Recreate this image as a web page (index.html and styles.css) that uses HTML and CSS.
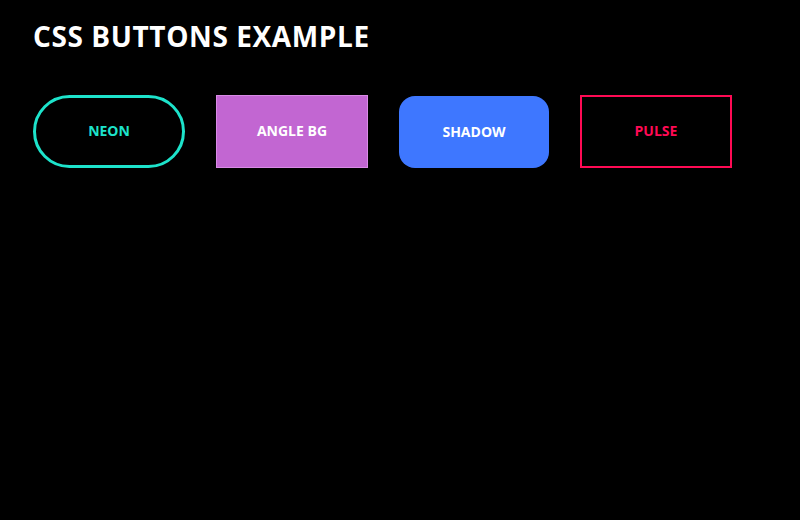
FILE: index.html
```html
<!DOCTYPE html>
<html>
<head>
<meta charset="utf-8">
<link rel="stylesheet" href="styles.css">
</head>
<body>
<h1 class="title">CSS BUTTONS EXAMPLE</h1>
<div class="row">
  <button class="btn neon">NEON</button>
  <button class="btn angle">ANGLE BG</button>
  <button class="btn shadow">SHADOW</button>
  <button class="btn pulse">PULSE</button>
</div>
</body>
</html>
```
FILE: styles.css
```css
html, body {
  margin: 0;
  padding: 0;
  background: #000;
  height: 100%;
}
body {
  padding: 20px 33px;
  box-sizing: border-box;
  font-family: "Open Sans", "Noto Sans", sans-serif;
}
.title {
  margin: 0;
  color: #fff;
  font-size: 28px;
  font-weight: 700;
  line-height: 32px;
  letter-spacing: 0.6px;
}
.row {
  display: flex;
  gap: 31px;
  margin-top: 43px;
}
.btn {
  width: 152px;
  height: 73px;
  box-sizing: border-box;
  font-family: "Open Sans", "Noto Sans", sans-serif;
  font-size: 14px;
  font-weight: 700;
  background: transparent;
  border: none;
  padding: 0 0 2px;
  display: flex;
  align-items: center;
  justify-content: center;
}
.neon {
  border: 3px solid #1de3cb;
  border-radius: 37px;
  color: #1de3cb;
}
.angle {
  background: #c266d2;
  border: 1px solid #d98ae6;
  color: #fff;
}
.shadow {
  background: #3e77ff;
  border-radius: 16px;
  color: #fff;
  width: 150px;
  height: 72px;
  margin-top: 1px;
}
.pulse {
  border: 2px solid #ff0a54;
  color: #ff0a54;
}
```
